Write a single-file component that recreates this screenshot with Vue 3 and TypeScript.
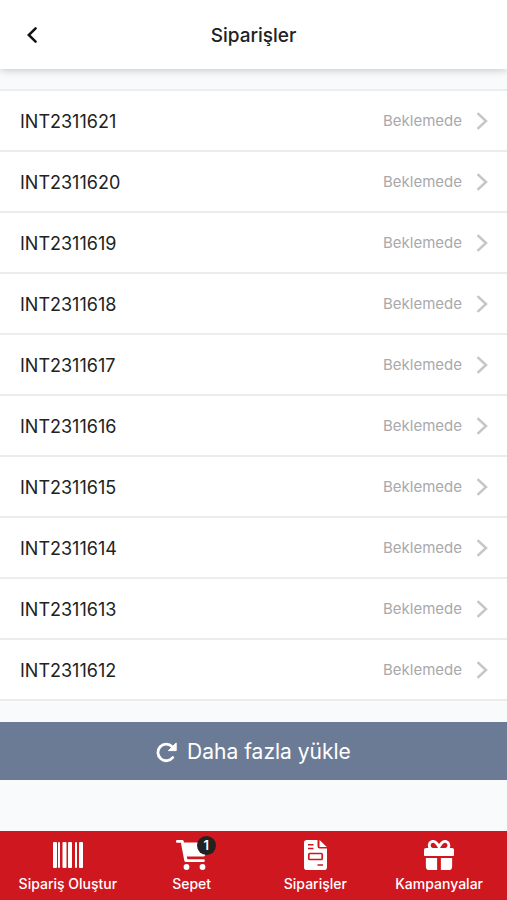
<script setup lang="ts">
import { ref } from 'vue'

interface Order {
  code: string
  status: string
}

const LAST_ORDER = 2311621
const PAGE_SIZE = 10

const buildOrders = (start: number): Order[] =>
  Array.from({ length: PAGE_SIZE }, (_, i) => ({
    code: `INT${start - i}`,
    status: 'Beklemede',
  }))

const orders = ref<Order[]>(buildOrders(LAST_ORDER))
const cartCount = ref(1)

function loadMore() {
  orders.value.push(...buildOrders(LAST_ORDER - orders.value.length))
}
</script>

<template>
  <div class="screen">
    <header class="header">
      <button class="back" type="button" aria-label="Geri">
        <svg width="12" height="18" viewBox="0 0 12 18" aria-hidden="true">
          <path d="M9.600 2.400 2.800 9l6.800 6.600" fill="none" stroke="#111" stroke-width="2.500" stroke-linecap="round" />
        </svg>
      </button>
      <h1 class="title">Siparişler</h1>
    </header>

    <main class="content">
      <ul class="orders">
        <li v-for="order in orders" :key="order.code">
          <a class="order" href="#">
            <span class="code">{{ order.code }}</span>
            <span class="status">{{ order.status }}</span>
            <svg class="chevron" width="12" height="18" viewBox="0 0 12 18" aria-hidden="true">
              <path d="M1.500 1.200 10 9l-8.500 7.800" fill="none" stroke="#c6c6c8" stroke-width="2.500" />
            </svg>
          </a>
        </li>
      </ul>

      <button class="more" type="button" @click="loadMore">
        <svg width="21" height="21" viewBox="0 0 21 21" aria-hidden="true">
          <path d="M16.200 4.700A8.300 8.300 0 1 0 16.800 15.500" fill="none" stroke="#fff" stroke-width="2.800" stroke-linecap="round" />
          <path d="M20.200 1v7.600h-7.800z" fill="#fff" stroke="#fff" stroke-width="1" stroke-linejoin="round" />
        </svg>
        <span>Daha fazla yükle</span>
      </button>
    </main>

    <nav class="tabs">
      <a class="tab" href="#">
        <svg width="30" height="30" viewBox="0 0 30 30" fill="#fff" aria-hidden="true">
          <rect x="0" y="2" width="4" height="26" rx="1" />
          <rect x="5" y="2" width="2" height="26" rx="1" />
          <rect x="9.500" y="2" width="4" height="26" rx="1" />
          <rect x="15" y="2" width="4" height="26" rx="1" />
          <rect x="22" y="2" width="2" height="26" rx="1" />
          <rect x="26" y="2" width="4" height="26" rx="1" />
        </svg>
        <span>Sipariş Oluştur</span>
      </a>
      <a class="tab" href="#">
        <span class="cart">
          <svg width="32" height="30" viewBox="0 0 32 30" fill="#fff" aria-hidden="true">
            <path d="M1 0h5.200q1.200 0 1.500 1.200L8 2.500h22.500q1.700 0 1.300 1.600l-2.700 11.200q-.3 1.300-1.600 1.300H10.800l.6 2.700h16.200q1.200 0 1.200 1.400t-1.200 1.400H10q-1.400 0-1.700-1.400L4.900 2.800H1Q0 2.800 0 1.400T1 0z" />
            <circle cx="10.500" cy="27" r="2.900" />
            <circle cx="26.500" cy="27" r="2.900" />
          </svg>
          <span class="badge">{{ cartCount }}</span>
        </span>
        <span>Sepet</span>
      </a>
      <a class="tab" href="#">
        <svg width="23" height="30" viewBox="0 0 23 30" aria-hidden="true">
          <path d="M2.800 0H13.500v6.200Q13.500 8.500 15.800 8.500H23v18.700Q23 30 20.200 30H2.800Q0 30 0 27.200V2.800Q0 0 2.800 0z" fill="#fff" />
          <path d="M15.500 0 22.800 7H15.500z" fill="#fff" />
          <path d="M4 4.700h5.500M4 8.500h5.500M13.500 25H19" fill="none" stroke="#cf171f" stroke-width="1.500" />
          <rect x="4.800" y="13.500" width="13.400" height="6" rx="1" fill="none" stroke="#cf171f" stroke-width="1.700" />
        </svg>
        <span>Siparişler</span>
      </a>
      <a class="tab" href="#">
        <svg width="30" height="30" viewBox="0 0 512 512" fill="#fff" aria-hidden="true">
          <path d="M32 448c0 35 14.300 64 46 64h146V308H32v140zm256 64h146c31.700 0 46-29 46-64V308H288v204zm192-376h-42.100c6.200-12.100 10.100-25.500 10.100-44C448 39.500 408.500 0 360 0c-41.600 0-68.500 21.300-103 68.300C222.500 21.300 195.600 0 154 0c-48.500 0-88 39.500-88 92 0 18.500 3.800 31.900 10.100 44H32c-17.700 0-32 14.300-32 32v86c0 12 7.200 20 16 20h480c8.800 0 16-8 16-20v-86c0-17.700-14.300-32-32-32zm-326.100 0c-22.100 0-40-19.900-40-44s17.900-44 40-44c19.900 0 34.600 7.300 86.100 88h-86.100zm206.100 0h-86.100c51.400-80.500 65.700-88 86.100-88 22.100 0 40 19.900 40 44s-17.900 44-40 44z" />
        </svg>
        <span>Kampanyalar</span>
      </a>
    </nav>
  </div>
</template>

<style>
body {
  margin: 0;
  background: #f8fafc;
}
</style>

<style scoped>
.screen {
  display: flex;
  flex-direction: column;
  min-height: 100vh;
  background: #f8fafc;
  color: #222;
  font-family: Inter, "Noto Sans", sans-serif;
}

.header {
  display: grid;
  grid-template-columns: 64px 1fr 64px;
  align-items: center;
  height: 69px;
  background: #fff;
  box-shadow: 0 1px 8px rgba(0, 0, 0, 0.22);
}

button {
  border: 0;
  font-family: inherit;
  cursor: pointer;
}

.back {
  display: flex;
  align-items: center;
  justify-content: center;
  height: 44px;
  padding: 0;
  background: none;
}

.title {
  margin: 0;
  padding-top: 2px;
  font-size: 19px;
  font-weight: 500;
  line-height: 24px;
  text-align: center;
}

.content {
  flex: 1;
  padding: 20px 0 51px;
}

.orders {
  margin: 0;
  padding: 0;
  list-style: none;
  border-top: 2px solid #ebeef0;
  background: #fff;
}

.order {
  display: flex;
  align-items: center;
  box-sizing: border-box;
  height: 61px;
  padding: 1px 19px 0 20px;
  border-bottom: 2px solid #ececed;
  color: inherit;
  text-decoration: none;
}

.code {
  flex: 1;
  padding-top: 2px;
  font-size: 18px;
  line-height: 24px;
}

.status {
  margin-right: 14px;
  color: #a9a9ab;
  font-size: 15px;
  line-height: 24px;
}

.more {
  display: flex;
  align-items: center;
  justify-content: center;
  gap: 10px;
  width: 100%;
  height: 58px;
  margin-top: 21px;
  padding: 2px 0 0;
  background: #6c7b95;
  color: #fff;
  font-size: 21px;
  line-height: 28px;
}

.tabs {
  display: grid;
  grid-template-columns: repeat(4, 1fr);
  height: 69px;
  padding: 0 6px;
  background: #cf171f;
}

.tab {
  display: flex;
  flex-direction: column;
  align-items: center;
  gap: 4px;
  padding-top: 9px;
  color: #fff;
  font-size: 14px;
  font-weight: 500;
  line-height: 20px;
  text-decoration: none;
  white-space: nowrap;
}

.tab svg {
  display: block;
}

.cart {
  position: relative;
}

.badge {
  position: absolute;
  top: -4px;
  right: -8px;
  width: 19px;
  height: 19px;
  border-radius: 50%;
  background: #222;
  font-size: 13px;
  font-weight: 600;
  line-height: 19px;
  text-align: center;
}
</style>
